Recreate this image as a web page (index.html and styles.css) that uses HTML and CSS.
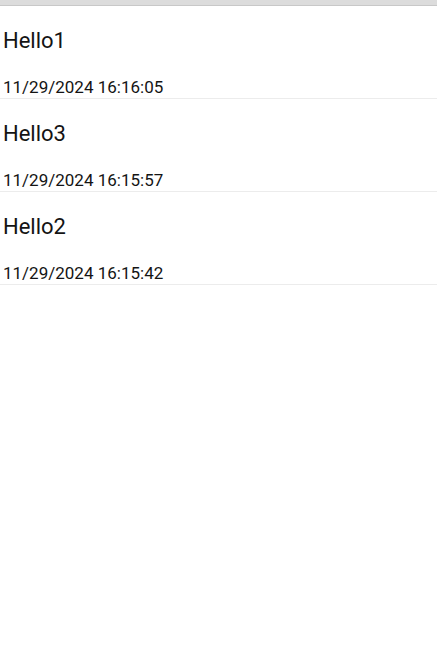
FILE: index.html
```html
<!DOCTYPE html>
<html>
<head>
<meta charset="utf-8">
<link rel="stylesheet" href="styles.css">
</head>
<body>
<div class="topbar"></div>
<ul class="list">
  <li class="item"><div class="title">Hello1</div><div class="date">11/29/2024 16:16:05</div></li>
  <li class="item"><div class="title">Hello3</div><div class="date">11/29/2024 16:15:57</div></li>
  <li class="item"><div class="title">Hello2</div><div class="date">11/29/2024 16:15:42</div></li>
</ul>
</body>
</html>
```
FILE: styles.css
```css
html, body {
  margin: 0;
  padding: 0;
  background: #ffffff;
  font-family: Roboto, "Noto Sans", sans-serif;
  color: #141414;
}
.topbar {
  height: 5px;
  background: #dcdcdc;
  border-bottom: 1px solid #c8c8c8;
}
.list {
  list-style: none;
  margin: 0;
  padding: 0;
}
.item {
  display: flex;
  flex-direction: column;
  height: 92px;
  border-bottom: 1px solid #ececec;
  padding-left: 3px;
  box-sizing: content-box;
}
.title {
  font-size: 22px;
  line-height: 26px;
  margin-top: 22px;
}
.date {
  font-size: 17px;
  line-height: 20px;
  margin-top: 23px;
}
```
